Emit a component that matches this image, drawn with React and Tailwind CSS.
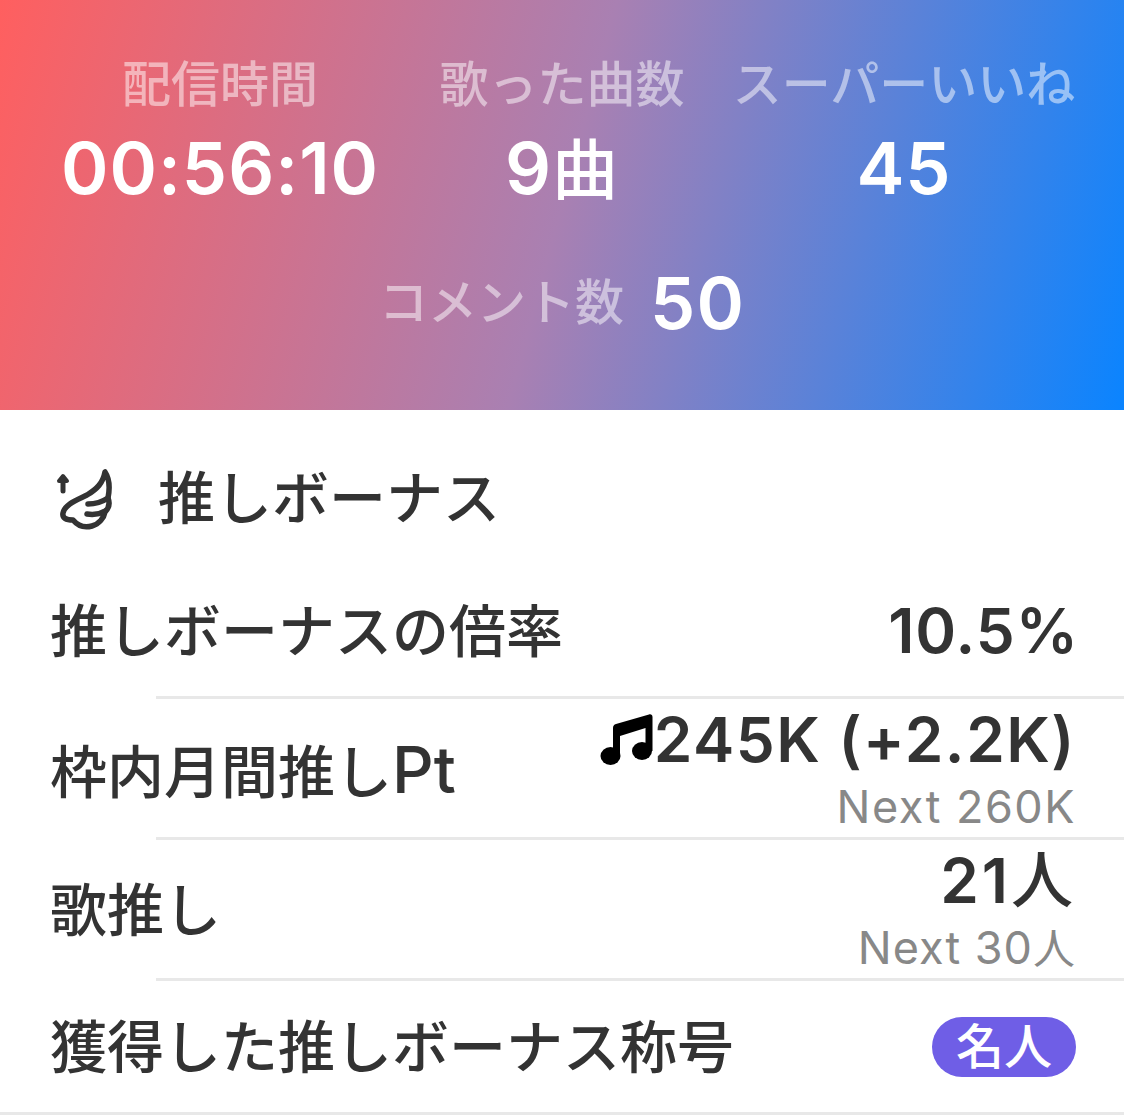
const font = "font-['Inter','Noto_Sans_CJK_JP',sans-serif]"

const WingIcon = () => (
  <svg width="60" height="66" viewBox="0 0 60 66" fill="none" stroke="#333" strokeLinecap="round" strokeLinejoin="round">
    <path d="M9 25V14" strokeWidth="5" />
    <path d="M5 15L9 10l4 5z" strokeWidth="4" fill="#333" />
    <path d="M51 6C49 17 43 23 33 29 C23 34 11 38 9 47 C8 52 12 54 19 54 C24 60 31 62 38 60 C45 58 50 52 51 46 C55 42 56 37 54 32 C56 22 55 12 51 6Z" strokeWidth="5.500" />
    <path d="M34 38C41 38 48 36 54 32" strokeWidth="5.500" />
    <path d="M33 48C39 49 46 48 51 45" strokeWidth="5.500" />
  </svg>
)

const NoteIcon = () => (
  <svg width="54" height="54" viewBox="0 0 54 54" fill="#000">
    <path d="M16 11L49 1.500c2-.6 3.500.6 3.500 2.500V38h-7V15L20 23V43h-7V15c0-2 1-3.500 3-4z" />
    <ellipse cx="10.500" cy="43" rx="10" ry="9" />
    <ellipse cx="42" cy="38" rx="10" ry="9" />
  </svg>
)

const Stat = ({ label, value, className }) => (
  <div className={`flex flex-col items-center ${className}`}>
    <div className="text-[49px] leading-[56px] font-medium text-white/50 whitespace-nowrap">{label}</div>
    <div className="mt-[15px] text-[72px] leading-[80px] font-semibold tracking-[1px] text-white whitespace-nowrap">{value}</div>
  </div>
)

const Row = ({ label, children, height }) => (
  <div className={`relative flex items-center justify-between pl-[50px] pr-[48px] ${height}`}>
    <div className="pt-[3px] text-[57px] font-medium text-[#333] whitespace-nowrap">{label}</div>
    {children}
  </div>
)

const Divider = () => <div className="ml-[156px] h-[3px] bg-[#e8e8e8]" />

export default function App() {
  return (
    <div className={`w-[1124px] h-[1118px] bg-white overflow-hidden ${font}`}>
      <div className="h-[410px] bg-[linear-gradient(105deg,#ff5f5f_0%,#a980b2_50%,#0a84ff_100%)] pt-[57px]">
        <div className="flex">
          <Stat label="配信時間" value="00:56:10" className="w-[440px]" />
          <Stat label="歌った曲数" value={<>9<span className="text-[66px] font-medium">曲</span></>} className="w-[244px]" />
          <Stat label="スーパーいいね" value="45" className="w-[440px]" />
        </div>
        <div className="flex items-center justify-center gap-[26px] mt-[53px]">
          <span className="text-[49px] font-medium text-white/50">コメント数</span>
          <span className="text-[72px] leading-[80px] font-semibold tracking-[1px] text-white">50</span>
        </div>
      </div>

      <div className="flex items-center h-[155px] pt-[22px] pl-[54px] gap-[44px]">
        <WingIcon />
        <div className="text-[57px] font-medium text-[#333]">推しボーナス</div>
      </div>

      <Row label="推しボーナスの倍率" height="h-[131px]">
        <span className="-mr-[3px] text-[62px] font-semibold tracking-[1px] text-[#333]">10.5%</span>
      </Row>
      <Divider />
      <Row label={<>枠内月間推し<span className="text-[65px]">Pt</span></>} height="h-[138px]">
        <div className="flex flex-col items-end">
          <div className="flex items-center text-[62px] leading-[76px] font-semibold tracking-[1.500px] text-[#333]">
            <NoteIcon />
            245K (+2.2K)
          </div>
          <div className="pt-[2px] text-[45px] leading-[54px] tracking-[1.500px] text-[#888]">Next 260K</div>
        </div>
      </Row>
      <Divider />
      <Row label="歌推し" height="h-[138px]">
        <div className="flex flex-col items-end">
          <div className="text-[62px] leading-[76px] font-semibold tracking-[3px] text-[#333]">21<span className="font-medium">人</span></div>
          <div className="pt-[2px] text-[45px] leading-[54px] tracking-[1px] text-[#888]">Next 30<span className="text-[42px]">人</span></div>
        </div>
      </Row>
      <Divider />
      <Row label="獲得した推しボーナス称号" height="h-[131px]">
        <span className="flex items-center justify-center w-[144px] h-[60px] rounded-full bg-[#6f5ee6] text-[48px] font-medium text-white">名人</span>
      </Row>
      <div className="h-[3px] bg-[#e8e8e8]" />
    </div>
  )
}
